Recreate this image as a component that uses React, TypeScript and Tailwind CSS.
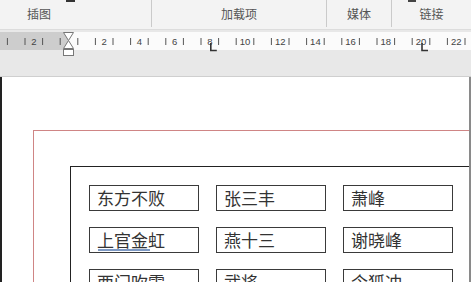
const names = [
  ['东方不败', '张三丰', '萧峰'],
  ['上官金虹', '燕十三', '谢晓峰'],
  ['西门吹雪', '武将', '令狐冲'],
];

const ORIGIN = 69;
const UNIT = 17.6;

const Ruler = () => {
  const ticks: number[] = [];
  for (let k = -4; k < 23; k++) ticks.push(ORIGIN + UNIT * (k + 0.5));
  const labels: number[] = [];
  for (let n = -2; n <= 22; n += 2) if (n !== 0) labels.push(n);

  return (
    <svg width="471" height="26" viewBox="0 0 471 26" className="block">
      <rect x="0" y="0" width="471" height="18" fill="#fbfbfb" />
      <rect x="0" y="0" width="68" height="18" fill="#cdcdcd" />
      {ticks.map((x, i) => (
        <line key={i} x1={x} x2={x} y1="6" y2="13" stroke="#555" strokeWidth="1" />
      ))}
      {labels.map((n) => (
        <text
          key={n}
          x={ORIGIN + UNIT * n}
          y="13"
          fontSize="9.5"
          fill="#444"
          textAnchor="middle"
          fontFamily="Liberation Sans, Arial, sans-serif"
        >
          {Math.abs(n)}
        </text>
      ))}
      {/* tab stops */}
      {[8, 20].map((n) => (
        <path
          key={n}
          d={`M${ORIGIN + UNIT * n + 1} 11 V18.5 H${ORIGIN + UNIT * n + 7}`}
          stroke="#333"
          strokeWidth="1.6"
          fill="none"
        />
      ))}
      {/* indent markers */}
      <path d="M63.5 0.5 H73.5 L68.5 8.5 Z" fill="#fff" stroke="#777" />
      <path d="M68.5 8.5 L73.5 16.5 H63.5 Z" fill="#fff" stroke="#777" />
      <rect x="63.5" y="17.5" width="10" height="6" fill="#fff" stroke="#777" />
    </svg>
  );
};

const App = () => {
  return (
    <div
      className="w-[471px] h-[282px] overflow-hidden flex flex-col bg-white"
      style={{ fontFamily: '"Noto Sans CJK SC", "Noto Sans", sans-serif' }}
    >
      {/* ribbon group labels */}
      <div className="relative h-[30px] shrink-0 bg-[#f3f3f3] border-b border-[#dcdcdc] flex text-[12px] text-[#555]">
        <div className="absolute left-[66px] top-0 w-[9px] h-[2px] bg-[#333]" />
        <div className="absolute left-[408px] top-0 w-[8px] h-[2px] bg-[#444]" />
        <div className="w-[152px] h-[27px] border-r border-[#cacaca] flex items-center pl-[27px]">插图</div>
        <div className="w-[175px] h-[27px] border-r border-[#cacaca] flex items-center justify-center">加载项</div>
        <div className="w-[65px] h-[27px] border-r border-[#cacaca] flex items-center justify-center">媒体</div>
        <div className="flex-1 h-[27px] flex items-center justify-center">链接</div>
      </div>

      {/* ruler area */}
      <div className="h-[47px] shrink-0 bg-[#e8e8e8] border-b border-[#cfcfcf] pt-[2px]">
        <Ruler />
      </div>

      {/* document */}
      <div className="flex-1 border-l-2 border-l-[#222] border-r-2 border-r-[#8a8a8a] pt-[53px] pl-[31px]">
        <div className="border-l border-t border-[#cf8585] h-[160px] pt-[35px] pl-[36px]">
          <div className="border-l border-t border-[#222] h-[140px] pt-[18px] pl-[18px] flex flex-col gap-[16px]">
            {names.map((row, r) => (
              <div key={r} className="flex gap-[17px]">
                {row.map((name, c) => (
                  <div
                    key={c}
                    className="relative w-[110px] h-[26px] shrink-0 border border-[#3a3a3a] pl-[7px] text-[17px] leading-[23px] text-[#333]"
                  >
                    {name}
                    {r === 1 && c === 0 && (
                      <div className="absolute left-[8px] top-[21px] w-[52px] h-[2px] bg-[#7d99c4]" />
                    )}
                  </div>
                ))}
              </div>
            ))}
          </div>
        </div>
      </div>
    </div>
  );
};

export default App;
